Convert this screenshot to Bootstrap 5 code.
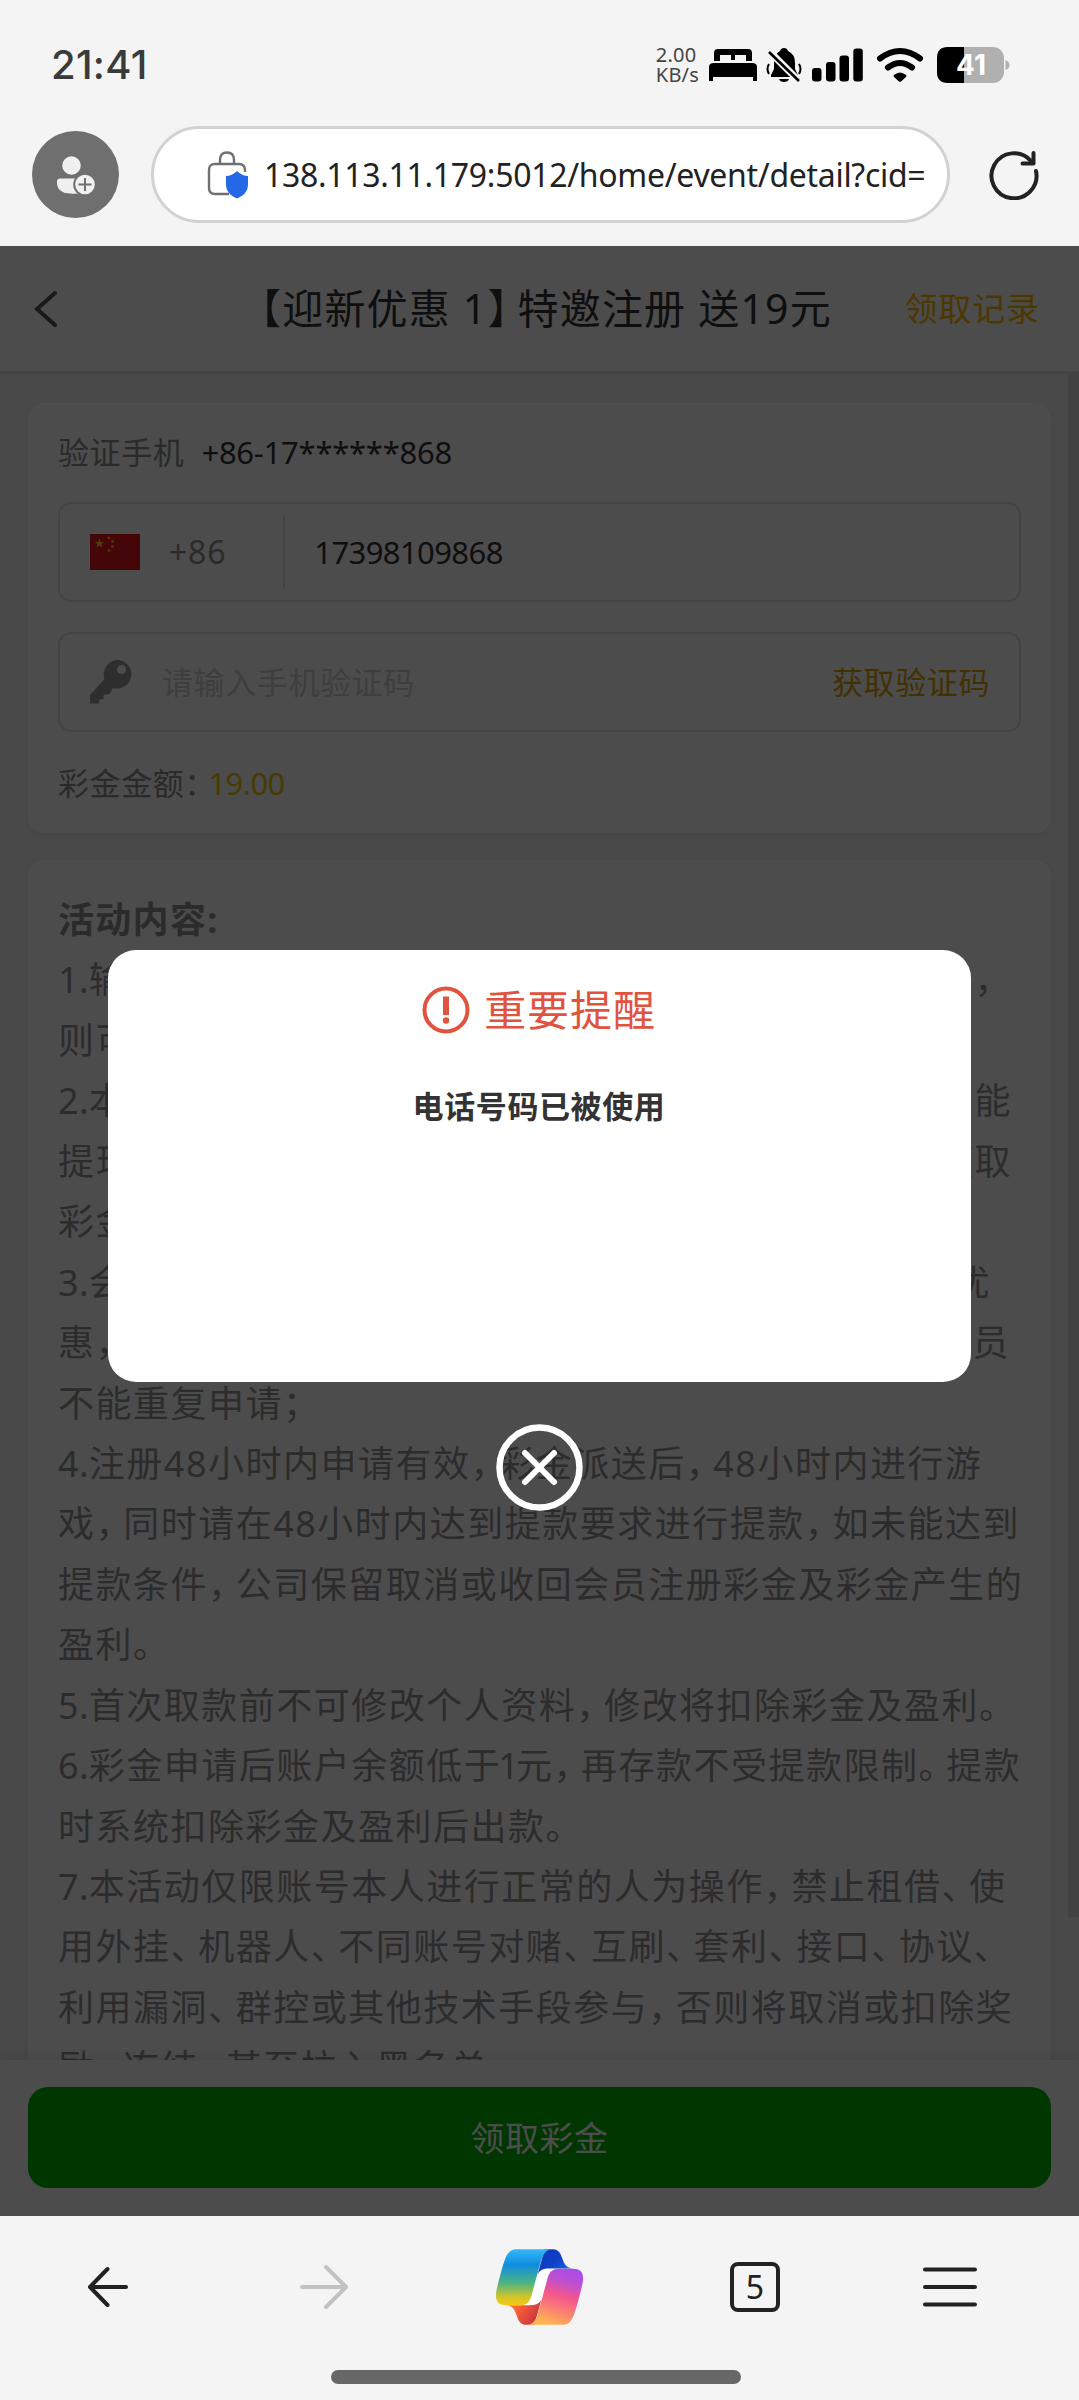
<!DOCTYPE html>
<html lang="zh-CN">
<head>
<meta charset="utf-8">
<meta name="viewport" content="width=device-width, initial-scale=1">
<title>迎新优惠</title>
<link href="https://cdn.jsdelivr.net/npm/bootstrap@5.3.0/dist/css/bootstrap.min.css" rel="stylesheet">
<style>
  body { font-family: "Noto Sans", "Noto Sans CJK SC", sans-serif; width: 1079px; height: 2400px; background: #f4f4f4; overflow: hidden; white-space: nowrap; line-height: 1; }
  svg { display: block; flex: none; }
  .statusbar { height: 126px; padding: 0 69px 0 51px; color: #3a3a3a; }
  .statusbar > * { height: 130px; }
  .clock { font-family: Inter, "Noto Sans", sans-serif; font-size: 40px; font-weight: 500; letter-spacing: .3px; }
  .netspeed { font-size: 20px; line-height: 20px; letter-spacing: .2px; color: #444; margin-right: 10px; }
  .addressbar { height: 120px; padding: 0 40px 0 32px; align-items: flex-start; }
  .avatar { width: 87px; height: 87px; margin-top: 5px; background: #6f6f6f; }
  .urlbox { width: 799px; height: 97px; margin-left: 32px; padding-left: 53px; border: 3px solid #d2d2d2; color: #222; font-size: 32px; }
  .urltext { margin-left: 15px; letter-spacing: -.3px; }
  .reload { margin: 24px 0 0 auto; }

  .webview { height: 1970px; }
  .apphead { height: 128px; flex: none; border-bottom: 3px solid #e2e2e2; background: #fff; padding: 0 39px 0 33px; }
  .apptitle { font-size: 41px; color: #333; letter-spacing: 1.2px; margin-left: 181px; }
  .apptitle .rb { letter-spacing: -11px; }
  .record { font-size: 33px; color: #ffba00; letter-spacing: .9px; }
  .scroller { flex: 1 1 0; background: #f5f5f5; padding: 29px 28px 0 28px; overflow: hidden; min-height: 0; }
  .panel { background: #fff; border-radius: 16px; box-shadow: 0 2px 10px rgba(0,0,0,.06); padding: 0 30px; flex: none; }
  .panel-form { height: 430px; }
  .panel-rules { margin-top: 27px; padding-top: 30px; height: 1400px; }
  .cap { font-size: 31px; letter-spacing: .6px; color: #8c8c8c; }
  .cap .colon { letter-spacing: -12px; }
  .row-phone { height: 99px; }
  .phone { font-size: 31px; color: #333; margin-left: 17px; letter-spacing: -.25px; }
  .field { height: 100px; border: 2.5px solid #e0e0e0; border-radius: 13px; padding: 0 29px 0 30px; }
  .field + .field { margin-top: 30px; }
  .dial { font-size: 32px; color: #8c8c8c; margin-left: 29px; letter-spacing: .8px; }
  .divider { width: 2px; height: 74px; background: #e4e4e4; margin: 0 29px 0 57px; }
  .number { font-size: 31px; color: #333; letter-spacing: -.6px; }
  .hint { font-size: 31px; letter-spacing: .6px; color: #cfcfcf; margin-left: 30px; }
  .getcode { font-size: 31px; letter-spacing: .6px; color: #dca300; margin-left: auto; }
  .amount { height: 102px; }
  .amount b { font-size: 31px; font-weight: 400; color: #efc800; letter-spacing: -.6px; margin-left: 5px; }
  .rule { font-size: 36px; letter-spacing: 1.5px; line-height: 60.44px; height: 60.44px; color: #939393; display: flex; }
  .rule .num { letter-spacing: .3px; }
  .rule .one { letter-spacing: -3px; margin-left: -3px; }
  .rule .pc { letter-spacing: -8.4px; }
  .rule .tail { margin-left: auto; }
  .rule-title { font-weight: 700; letter-spacing: 1.3px; color: #8f8f8f; }
  .scrollthumb { position: absolute; right: 0; top: 126px; width: 11px; height: 1545px; background: #dedede; }
  .sheet { height: 156px; flex: none; background: #fff; padding: 27px 28px 0 28px; box-shadow: 0 -2px 14px rgba(0,0,0,.1); z-index: 1; }
  .claim { height: 101px; border-radius: 20px; background: #00b500; color: #fff; font-size: 34px; letter-spacing: .6px; border: 0; width: 100%; padding: 0; line-height: 1; }

  .dim { position: absolute; inset: 0; background: rgba(0,0,0,.7); z-index: 5; padding-top: 704px; }
  .notice { width: 863px; height: 432px; background: #fff; border-radius: 28px; padding-top: 36px; margin-right: 1px; }
  .notice-title { color: #e0533f; font-size: 42px; letter-spacing: .9px; height: 48px; }
  .notice-title span { margin-left: 14px; }
  .notice-msg { color: #333; font-size: 31px; font-weight: 700; letter-spacing: .6px; margin-top: 57px; }
  .closer { margin-top: 42px; }

  .toolbar { height: 140px; color: #222; }
  .toolbar > div { height: 142px; }
  .tabs { width: 50px; height: 50px; border: 4px solid #222; border-radius: 8px; font-size: 32px; }
  .homebar { width: 410px; height: 14px; background: #676767; margin-top: 14px; margin-right: 7px; }
</style>
</head>
<body class="d-flex flex-column">

<div class="statusbar d-flex">
  <div class="clock d-flex align-items-center">21:41</div>
  <div class="d-flex align-items-center ms-auto">
    <div class="netspeed">2.00<br>KB/s</div>
    <svg width="48" height="36" viewBox="0 0 48 36">
      <path d="M5 14V6q0-4 4-4h30q4 0 4 4v8h-6V8H26v5h-4V8H11v6Z"/>
      <path d="M0 34V20q0-4 5-4h38q5 0 5 4v14h-4v-4H4v4Z"/>
    </svg>
    <svg width="36" height="36" viewBox="0 0 36 36" style="margin-left:9px">
      <path d="M18 1q3 0 4 3q7 3 7 12v6l3 6v2H5v-2l3-6v-6Q8 7 14 4q1-3 4-3M13 32h10q-1 3-5 3t-5-3"/>
      <path d="M2 3 34 35" stroke="#f4f4f4" stroke-width="7"/>
      <path d="M3 5 33 34" stroke="#000" stroke-width="2.6"/>
      <path d="M3 17q-3 5 0 10M33 17q3 5 0 10" fill="none" stroke="#000" stroke-width="2"/>
    </svg>
    <svg width="52" height="36" viewBox="0 0 52 36" style="margin-left:10px">
      <rect x="0" y="21" width="9.5" height="13.5" rx="3"/><rect x="14" y="15" width="9.5" height="19.5" rx="3"/>
      <rect x="27.500" y="8.500" width="9.500" height="26" rx="3"/><rect x="41.300" y="1.500" width="9.500" height="33" rx="3"/>
    </svg>
    <svg width="46" height="36" viewBox="0 0 46 36" style="margin-left:13px">
      <path d="M3 11.500Q23-3.500 43 11.500" fill="none" stroke="#000" stroke-width="6" stroke-linecap="round"/>
      <path d="M11 20.500Q23 11.500 35 20.500" fill="none" stroke="#000" stroke-width="6" stroke-linecap="round"/>
      <path d="M17 28q6-5 12 0q1 1 0 2l-5 4.500q-1 .6-2 0L17 30q-1-1 0-2"/>
    </svg>
    <svg width="73" height="36" viewBox="0 0 73 36" style="margin-left:14px">
      <rect width="67" height="36" rx="11" fill="#b0b0b0"/>
      <path d="M27 0H11Q0 0 0 11v14q0 11 11 11h16Z"/>
      <path d="M68.500 13q4 1.500 4 5t-4 5Z" fill="#b0b0b0"/>
      <text x="34" y="28" text-anchor="middle" fill="#fff" font-family="Inter, sans-serif" font-weight="700" font-size="28">41</text>
    </svg>
  </div>
</div>

<div class="addressbar d-flex">
  <div class="avatar rounded-circle d-flex align-items-center justify-content-center">
    <svg width="40" height="40" viewBox="0 0 40 40" fill="#f0f0f0">
      <circle cx="15.500" cy="10.500" r="9.300"/>
      <path d="M4 23.500H22V38.500Q1 40 1 28v-1.500q0-3 3-3"/>
      <circle cx="29" cy="29.500" r="10.800" stroke="#6f6f6f" stroke-width="2"/>
      <path d="M29 23v13M22.500 29.500h13" stroke="#6f6f6f" stroke-width="2"/>
    </svg>
  </div>
  <div class="urlbox rounded-pill bg-white d-flex align-items-center">
    <svg width="42" height="48" viewBox="0 0 42 48">
      <path d="M38 21v-2q0-6-6-6H8q-6 0-6 6v18q0 6 6 6h14M13 12V9q0-7.500 7-7.500T27 9v3" fill="none" stroke="#707070" stroke-width="2.400"/>
      <path d="M30 20q5 5 11 5v9q0 9-11 13.500Q19 43 19 34v-9q6 0 11-5" fill="#2468e8"/>
    </svg>
    <span class="urltext">138.113.11.179:5012/home/event/detail?cid=</span>
  </div>
  <svg class="reload" width="50" height="50" viewBox="0 0 50 50" fill="none" stroke="#222" stroke-width="4">
    <path d="M47 21A22.500 22.500 0 1 1 42 11" stroke-linecap="round"/>
    <path d="M44.500 3v10.500H33.500" stroke-linecap="round" stroke-linejoin="round"/>
  </svg>
</div>

<div class="webview position-relative d-flex flex-column overflow-hidden">
  <div class="apphead d-flex align-items-center">
    <svg width="26" height="38" viewBox="0 0 26 38" fill="none" stroke="#555" stroke-width="4"><path d="M22 3 4 19l18 16" stroke-linecap="round"/></svg>
    <div class="apptitle">【迎新优惠 1<span class="rb">】</span>特邀注册 送19元</div>
    <div class="record ms-auto">领取记录</div>
  </div>

  <div class="scroller d-flex flex-column">
    <div class="panel panel-form">
      <div class="row-phone d-flex align-items-center"><span class="cap">验证手机</span><span class="phone">+86-17******868</span></div>
      <div class="field d-flex align-items-center">
        <svg width="50" height="36" viewBox="0 0 50 36">
          <rect width="50" height="36" fill="#e6151f"/>
          <g fill="#ffe100">
            <path d="m9.500 4.500 1.100 3.400h3.600l-2.900 2.100 1.100 3.400-2.900-2.100-2.900 2.100 1.100-3.400-2.900-2.100h3.600z"/>
            <circle cx="19" cy="4" r="1.300"/><circle cx="22.500" cy="7.500" r="1.300"/><circle cx="22.500" cy="12.500" r="1.300"/><circle cx="19" cy="16.500" r="1.300"/>
          </g>
        </svg>
        <span class="dial">+86</span><span class="divider"></span><span class="number">17398109868</span>
      </div>
      <div class="field d-flex align-items-center">
        <svg width="42" height="44" viewBox="0 0 42 44" fill="#999">
          <path fill-rule="evenodd" d="M27 0a14.300 14.300 0 1 1-4 28l-3.500 6-6 1v4l-4 .5-1 4H0v-8.500L14.500 19A14.300 14.300 0 0 1 27 0m4.500 5a4.500 4.500 0 1 0 .1 0"/>
        </svg>
        <span class="hint">请输入手机验证码</span><span class="getcode">获取验证码</span>
      </div>
      <div class="amount d-flex align-items-center"><span class="cap">彩金金额<span class="colon">：</span></span><b>19.00</b></div>
    </div>

    <div class="panel panel-rules">
      <div class="rule rule-title">活动内容:</div>
      <div class="rule"><span>1.输入</span><span class="tail" style="margin-right:9px">，</span></div>
      <div class="rule"><span>则可</span></div>
      <div class="rule"><span>2.本次</span><span class="tail" style="margin-right:9px">才能</span></div>
      <div class="rule"><span>提现</span><span class="tail" style="margin-right:9px">领取</span></div>
      <div class="rule"><span>彩金</span></div>
      <div class="rule"><span>3.会员</span><span class="tail" style="margin-right:30px">优</span></div>
      <div class="rule"><span>惠，</span><span class="tail" style="margin-right:11px">会员</span></div>
      <div class="rule"><span>不能重复申请；</span></div>
      <div class="rule"><span>4.注册48小时内申请有效，彩金派送后，48小时内进行游</span></div>
      <div class="rule"><span>戏，同时请在48小时内达到提款要求进行提款，如未能达到</span></div>
      <div class="rule"><span>提款条件，公司保留取消或收回会员注册彩金及彩金产生的</span></div>
      <div class="rule"><span>盈利。</span></div>
      <div class="rule"><span>5.首次取款前不可修改个人资料，修改将扣除彩金及盈利。</span></div>
      <div class="rule"><span>6.彩金申请后账户余额低于1元，再存款不受提款限制。提款</span></div>
      <div class="rule"><span>时系统扣除彩金及盈利后出款。</span></div>
      <div class="rule"><span>7.本活动仅限账号本人进行正常的人为操作，禁止租借、使</span></div>
      <div class="rule"><span>用外挂、机器人、不同账号对赌、互刷、套利、接口、协议、</span></div>
      <div class="rule"><span>利用漏洞、群控或其他技术手段参与，否则将取消或扣除奖</span></div>
      <div class="rule"><span>励、冻结、甚至拉入黑名单。</span></div>
    </div>
  </div>
  <div class="scrollthumb"></div>

  <div class="sheet"><button class="claim">领取彩金</button></div>

  <div class="dim d-flex flex-column align-items-center">
    <div class="notice d-flex flex-column align-items-center">
      <div class="notice-title d-flex align-items-center">
        <svg width="48" height="48" viewBox="0 0 48 48"><circle cx="24" cy="24" r="21.500" fill="none" stroke="#e0533f" stroke-width="4"/><path d="M21 10.500h6V29h-6Z" fill="#e0533f"/><circle cx="24" cy="34.500" r="3.200" fill="#e0533f"/></svg>
        <span>重要提醒</span>
      </div>
      <div class="notice-msg">电话号码已被使用</div>
    </div>
    <svg class="closer" width="87" height="87" viewBox="0 0 87 87" fill="none" stroke="#fff"><circle cx="43.500" cy="43.500" r="40" stroke-width="6.500"/><path d="m29 29 29 29M58 29 29 58" stroke-width="6" stroke-linecap="round"/></svg>
  </div>
</div>

<div class="toolbar d-flex">
  <div class="d-flex align-items-center" style="width:216px;padding-left:86px">
    <svg width="44" height="44" viewBox="0 0 44 44" fill="none" stroke="#222" stroke-width="4" stroke-linecap="round" stroke-linejoin="round"><path d="M21.500 4 4 22l17.500 18M4 22h36"/></svg>
  </div>
  <div class="d-flex align-items-center" style="width:216px;padding-left:82px">
    <svg width="52" height="46" viewBox="0 0 52 46" fill="none" stroke="#c2c2c2" stroke-width="4" stroke-linecap="round" stroke-linejoin="round"><path d="m28 3 20 20-20 20M48 23H4"/></svg>
  </div>
  <div class="d-flex align-items-center justify-content-center" style="width:215px">
    <svg width="87" height="76" viewBox="34 27 261 227">
      <defs>
        <linearGradient id="ga" x1="0" y1="0" x2="0" y2="1"><stop offset="0" stop-color="#33b8f7"/><stop offset=".28" stop-color="#0f8de0"/><stop offset=".6" stop-color="#4cb383"/><stop offset=".85" stop-color="#cfc52a"/><stop offset="1" stop-color="#fbc80f"/></linearGradient>
        <linearGradient id="gb" x1=".8" y1="0" x2=".5" y2="1"><stop offset="0" stop-color="#a64bea"/><stop offset=".25" stop-color="#c050cf"/><stop offset=".5" stop-color="#f4568a"/><stop offset=".75" stop-color="#fb8073"/><stop offset="1" stop-color="#ffb353"/></linearGradient>
        <linearGradient id="gc" x1="0" y1="0" x2="1" y2="1"><stop offset="0" stop-color="#0c39b8"/><stop offset=".5" stop-color="#103fca"/><stop offset="1" stop-color="#1b7be8"/></linearGradient>
        <linearGradient id="gd" x1="0" y1="0" x2="1" y2=".5"><stop offset="0" stop-color="#ff8a45"/><stop offset=".5" stop-color="#f4593a"/><stop offset="1" stop-color="#c8363e"/></linearGradient>
      </defs>
      <path d="M120 196 160 84h55l-40 112Z" fill="#fff"/>
      <path d="M180 27H205C222 27 228 40 233 55C238 72 246 84 265 85H192C172 85 163 92 158 105Z" fill="url(#gc)"/>
      <path d="M149 254H124C107 254 101 241 96 226C91 209 83 196 64 195H137C157 195 166 188 171 176Z" fill="url(#gd)"/>
      <path d="M95 27H200C180 28 172 50 166 72L140 168C134 187 125 195 105 195H65C36 195 30 178 36 148C44 115 53 78 62 55C70 35 80 27 95 27Z" fill="url(#ga)"/>
      <path d="M234 254H129C149 253 157 231 163 209L189 113C195 94 204 86 224 86H264C293 86 299 103 293 133C285 166 276 203 267 226C259 246 249 254 234 254Z" fill="url(#gb)"/>
    </svg>
  </div>
  <div class="d-flex align-items-center justify-content-center" style="width:216px"><div class="tabs d-flex align-items-center justify-content-center">5</div></div>
  <div class="d-flex align-items-center" style="padding-left:59px">
    <svg width="56" height="40" viewBox="0 0 56 40" stroke="#222" stroke-width="4" stroke-linecap="round"><path d="M3 2.500h50M3 20h50M3 37.500h50"/></svg>
  </div>
</div>
<div class="homebar rounded-pill align-self-center"></div>

<script src="https://cdn.jsdelivr.net/npm/bootstrap@5.3.0/dist/js/bootstrap.bundle.min.js"></script>
<script>
  // Tighten full-width punctuation and list numbers inside the rule text
  document.querySelectorAll('.rule span').forEach(function (el) {
    if (el.classList.contains('tail')) return;
    el.innerHTML = el.textContent
      .replace(/[，、。；]/g, '<span class="pc">$&</span>')
      .replace(/^\d\./, '<span class="num">$&</span>')
      .replace(/1(?=元)/, '<span class="one">1</span>');
  });
</script>
</body>
</html>
